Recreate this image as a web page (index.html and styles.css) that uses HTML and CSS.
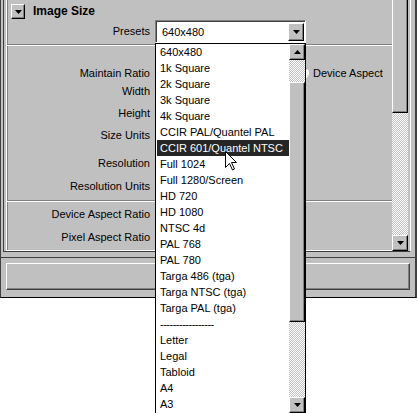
FILE: index.html
```html
<!DOCTYPE html>
<html lang="en">
  <head>
    <meta charset="UTF-8" />
    <title>Render Globals - Image Size</title>
    <link rel="stylesheet" href="styles.css">
  </head>
  <body>
    <div class="window">
      <div class="frame">
        <div class="section">
          <div class="section-head">
            <span class="toggle">
              <svg width="7" height="4" viewBox="0 0 7 4"><polygon points="0,0 7,0 3.5,4" /></svg>
            </span>
            <span class="section-title">Image Size</span>
          </div>

          <div class="row row-presets">
            <span class="label">Presets</span>
            <div class="select">
              <span class="select-value">640x480</span>
              <span class="arrow-btn">
                <svg width="7" height="4" viewBox="0 0 7 4"><polygon points="0,0 7,0 3.5,4" /></svg>
              </span>

              <div class="dropdown">
                <ul class="options">
                  <li>640x480</li>
                  <li>1k Square</li>
                  <li>2k Square</li>
                  <li>3k Square</li>
                  <li>4k Square</li>
                  <li>CCIR PAL/Quantel PAL</li>
                  <li class="selected">CCIR 601/Quantel NTSC</li>
                  <li>Full 1024</li>
                  <li>Full 1280/Screen</li>
                  <li>HD 720</li>
                  <li>HD 1080</li>
                  <li>NTSC 4d</li>
                  <li>PAL 768</li>
                  <li>PAL 780</li>
                  <li>Targa 486 (tga)</li>
                  <li>Targa NTSC (tga)</li>
                  <li>Targa PAL (tga)</li>
                  <li class="divider">-----------------</li>
                  <li>Letter</li>
                  <li>Legal</li>
                  <li>Tabloid</li>
                  <li>A4</li>
                  <li>A3</li>
                </ul>
                <div class="list-scroll">
                  <span class="arrow-btn">
                    <svg width="7" height="4" viewBox="0 0 7 4"><polygon points="0,4 7,4 3.5,0" /></svg>
                  </span>
                  <div class="track">
                    <div class="thumb list-thumb"></div>
                  </div>
                  <span class="arrow-btn">
                    <svg width="7" height="4" viewBox="0 0 7 4"><polygon points="0,0 7,0 3.5,4" /></svg>
                  </span>
                </div>
              </div>
            </div>
          </div>

          <div class="sep"></div>

          <div class="row row-check">
            <span class="label"></span>
            <span class="checkbox"></span>
          </div>
          <div class="row row-ratio">
            <span class="label">Maintain Ratio</span>
            <div class="radio-group">
              <span class="radio-item"><span class="radio"></span></span>
              <span class="radio-item"><span class="radio"></span>Device Aspect</span>
            </div>
          </div>
          <div class="row row-width">
            <span class="label">Width</span>
            <span class="field"></span>
          </div>
          <div class="row row-height">
            <span class="label">Height</span>
            <span class="field"></span>
          </div>
          <div class="row row-units">
            <span class="label">Size Units</span>
            <span class="field"></span>
          </div>
          <div class="row row-res">
            <span class="label">Resolution</span>
            <span class="field"></span>
          </div>
          <div class="row row-resunits">
            <span class="label">Resolution Units</span>
            <span class="field"></span>
          </div>

          <div class="sep sep-lower"></div>

          <div class="row row-dar">
            <span class="label">Device Aspect Ratio</span>
            <span class="field"></span>
          </div>
          <div class="row row-par">
            <span class="label">Pixel Aspect Ratio</span>
            <span class="field"></span>
          </div>
        </div>

        <div class="vscroll">
          <div class="thumb main-thumb"></div>
          <div class="track"></div>
          <span class="arrow-btn">
            <svg width="7" height="4" viewBox="0 0 7 4"><polygon points="0,0 7,0 3.5,4" /></svg>
          </span>
        </div>
      </div>

      <div class="bottom">
        <div class="bottom-button"></div>
      </div>
    </div>

    <svg class="cursor" width="13" height="20" viewBox="0 0 13 20">
      <path d="M0.5 0.5 L0.5 16.5 L4.5 12.5 L7.5 19 L9.5 18 L6.5 11.5 L11.5 11.5 Z" fill="#fff" stroke="#000" stroke-width="1" />
    </svg>
  </body>
</html>
```

FILE: styles.css
```css
html,
body {
  margin: 0;
  height: 100%;
  overflow: hidden;
}

body {
  position: relative;
  background-color: white;
  color: black;
  font-family: "Liberation Sans", Arial, sans-serif;
  font-size: 11px;
}

.window {
  width: 417px;
  height: 298px;
  box-sizing: border-box;
  background-color: #c0c0c0;
  border-left: 1px solid #404040;
  border-right: 2px solid #404040;
  border-bottom: 1px solid black;
  display: flex;
  flex-direction: column;
}

.frame {
  display: flex;
  height: 252px;
  flex: none;
  box-sizing: border-box;
  margin: 0 4px 0 2px;
  padding: 0 2px;
  border-left: 1px solid #404040;
  border-right: 1px solid white;
  border-bottom: 1px solid #404040;
}

.section {
  flex: 1;
  border-left: 1px solid white;
  border-bottom: 1px solid white;
  box-shadow: inset 1px 0 #808080;
}

.section-head {
  height: 20px;
  box-sizing: border-box;
  padding-top: 4px;
  display: flex;
  align-items: flex-start;
}

.toggle {
  width: 14px;
  height: 15px;
  margin-left: 4px;
  box-sizing: border-box;
  background-color: #c0c0c0;
  border: 1px solid;
  border-color: white black black white;
  box-shadow: inset -1px -1px #808080;
  display: flex;
  align-items: center;
  justify-content: center;
}

.section-title {
  margin-left: 8px;
  font-size: 12px;
  font-weight: bold;
  line-height: 15px;
}

.row {
  display: flex;
  align-items: center;
  height: 22px;
}

.label {
  flex: none;
  width: 143px;
  margin-right: 5px;
  text-align: right;
  white-space: nowrap;
}

.row-presets {
  height: 24px;
  align-items: flex-start;
}
.row-presets .label {
  line-height: 23px;
}
.row-check {
  height: 18px;
}
.row-ratio {
  height: 17px;
}
.row-width {
  height: 20px;
}
.row-height {
  height: 23px;
}
.row-res {
  margin-top: 6px;
}
.row-resunits {
  height: 24px;
}
.row-dar {
  height: 24px;
}

.sep {
  height: 2px;
  box-sizing: border-box;
  border-top: 1px solid #808080;
  border-bottom: 1px solid white;
}
.sep-lower {
  margin-top: 2px;
}

/* presets combo box */
.select {
  position: relative;
  width: 151px;
  height: 23px;
  box-sizing: border-box;
  background-color: white;
  border: 1px solid;
  border-color: #808080 white white #808080;
  box-shadow: inset 1px 1px #404040;
  display: flex;
  align-items: center;
  justify-content: space-between;
}

.select-value {
  padding-left: 6px;
}

.select > .arrow-btn {
  margin-right: 1px;
}

.arrow-btn {
  flex: none;
  width: 16px;
  height: 18px;
  box-sizing: border-box;
  background-color: #c0c0c0;
  border: 1px solid;
  border-color: white black black white;
  box-shadow: inset -1px -1px #808080;
  display: flex;
  align-items: center;
  justify-content: center;
}

.dropdown {
  position: absolute;
  left: -1px;
  top: 22px;
  z-index: 2;
  width: 151px;
  height: 371px;
  box-sizing: border-box;
  background-color: white;
  border: 1px solid black;
  display: flex;
}

.options {
  flex: 1;
  margin: 0;
  padding: 0;
  list-style: none;
  overflow: hidden;
}

.options li {
  height: 16px;
  line-height: 16px;
  padding-left: 4px;
  white-space: nowrap;
  overflow: hidden;
}

.options li.selected {
  margin-left: 1px;
  padding-left: 3px;
  background-color: #262626;
  color: white;
}

.options li.divider {
  letter-spacing: -0.5px;
}

.list-scroll,
.vscroll {
  flex: none;
  width: 16px;
  display: flex;
  flex-direction: column;
}

.list-scroll .arrow-btn,
.vscroll .arrow-btn {
  height: 16px;
}

.track {
  flex: 1;
  background: repeating-conic-gradient(white 0 25%, #c0c0c0 0 50%) 0 0 / 2px 2px;
}

.thumb {
  box-sizing: border-box;
  background-color: #c0c0c0;
  border: 1px solid;
  border-color: white black black white;
  box-shadow: inset -1px -1px #808080;
}

.list-thumb {
  margin-top: 22px;
  height: 240px;
}

.main-thumb {
  height: 113px;
  border-top: none;
}

/* controls sitting under the open list */
.checkbox {
  width: 13px;
  height: 13px;
  margin-left: 3px;
  box-sizing: border-box;
  background-color: white;
  border: 1px solid;
  border-color: #808080 white white #808080;
}

.radio-group {
  display: flex;
}

.radio-item {
  display: flex;
  align-items: center;
  gap: 4px;
  white-space: nowrap;
}

.radio-item:first-child {
  width: 142px;
}

.radio {
  width: 12px;
  height: 12px;
  box-sizing: border-box;
  border-radius: 50%;
  background-color: white;
  border: 1px solid;
  border-color: #808080 white white #808080;
}

.field {
  width: 70px;
  height: 18px;
  box-sizing: border-box;
  background-color: white;
  border: 1px solid;
  border-color: #808080 white white #808080;
}

.bottom {
  flex: 1;
  margin-top: 5px;
  padding: 5px 5px 0;
  border-top: 1px solid #404040;
}

.bottom-button {
  height: 27px;
  box-sizing: border-box;
  background-color: #c0c0c0;
  border: 1px solid;
  border-color: white #404040 #404040 white;
  box-shadow: inset -1px -1px #808080;
}

.cursor {
  position: absolute;
  left: 225px;
  top: 151px;
  z-index: 3;
}
```
